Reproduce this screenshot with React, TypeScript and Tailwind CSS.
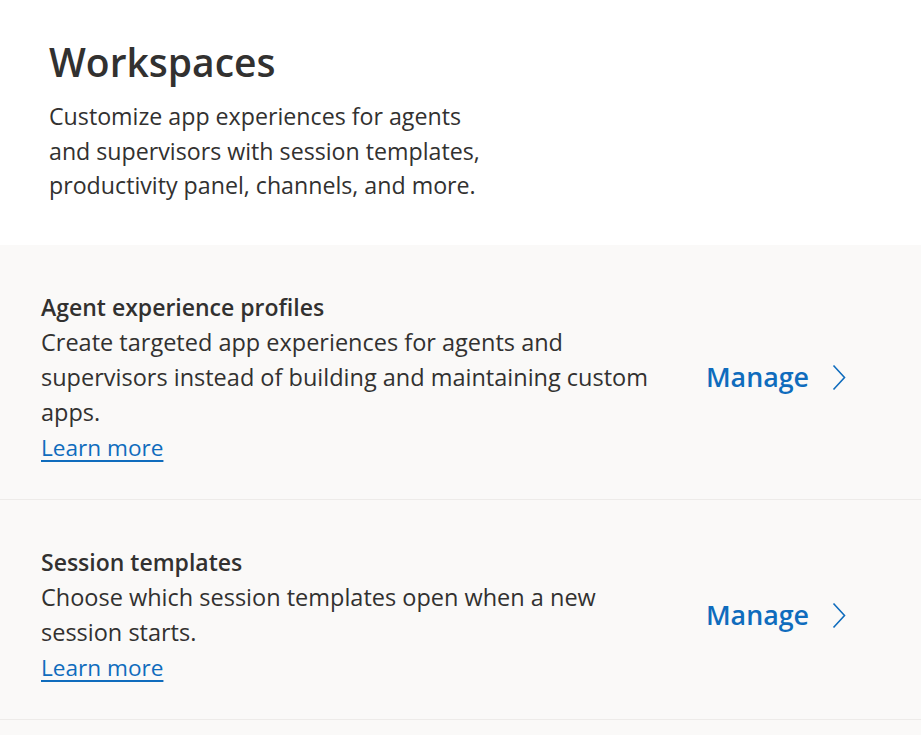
type Item = {
  title: string;
  body: string;
};

const items: Item[] = [
  {
    title: "Agent experience profiles",
    body: "Create targeted app experiences for agents and supervisors instead of building and maintaining custom apps.",
  },
  {
    title: "Session templates",
    body: "Choose which session templates open when a new session starts.",
  },
];

const Chevron = () => (
  <svg width="14" height="27" viewBox="0 0 14 27" fill="none" aria-hidden="true">
    <path d="M1.5 1.5 L12.5 13.5 L1.5 25.5" stroke="currentColor" strokeWidth="1.6" strokeLinejoin="miter" />
  </svg>
);

const FeatureRow = ({ item }: { item: Item }) => (
  <div className="flex items-center border-b border-[#edebe9] pl-[41px] pr-[75px] pt-[44px] pb-[34px]">
    <div className="w-[620px] text-[#323130]">
      <h2 className="text-[23px] font-semibold leading-[36px]">{item.title}</h2>
      <p className="text-[23.5px] leading-[35px]">{item.body}</p>
      <a href="#" className="text-[22.6px] leading-[35px] text-[#0f6cbd] underline underline-offset-[4px]">
        Learn more
      </a>
    </div>
    <button className="ml-auto mt-[2px] flex items-center gap-[23px] text-[26.8px] font-semibold text-[#0f6cbd]">
      Manage
      <Chevron />
    </button>
  </div>
);

export default function App() {
  return (
    <div className="min-h-screen bg-white font-['Open_Sans',sans-serif]">
      <div className="px-[49px] pt-[36px] pb-[42px] text-[#323130]">
        <h1 className="text-[39px] font-semibold leading-[52px]">Workspaces</h1>
        <p className="mt-[11px] w-[435px] text-[23.2px] leading-[34.5px]">
          Customize app experiences for agents and supervisors with session templates, productivity panel, channels, and more.
        </p>
      </div>
      <div className="bg-[#faf9f8]">
        {items.map((item) => (
          <FeatureRow key={item.title} item={item} />
        ))}
        <div className="h-[40px]" />
      </div>
    </div>
  );
}
